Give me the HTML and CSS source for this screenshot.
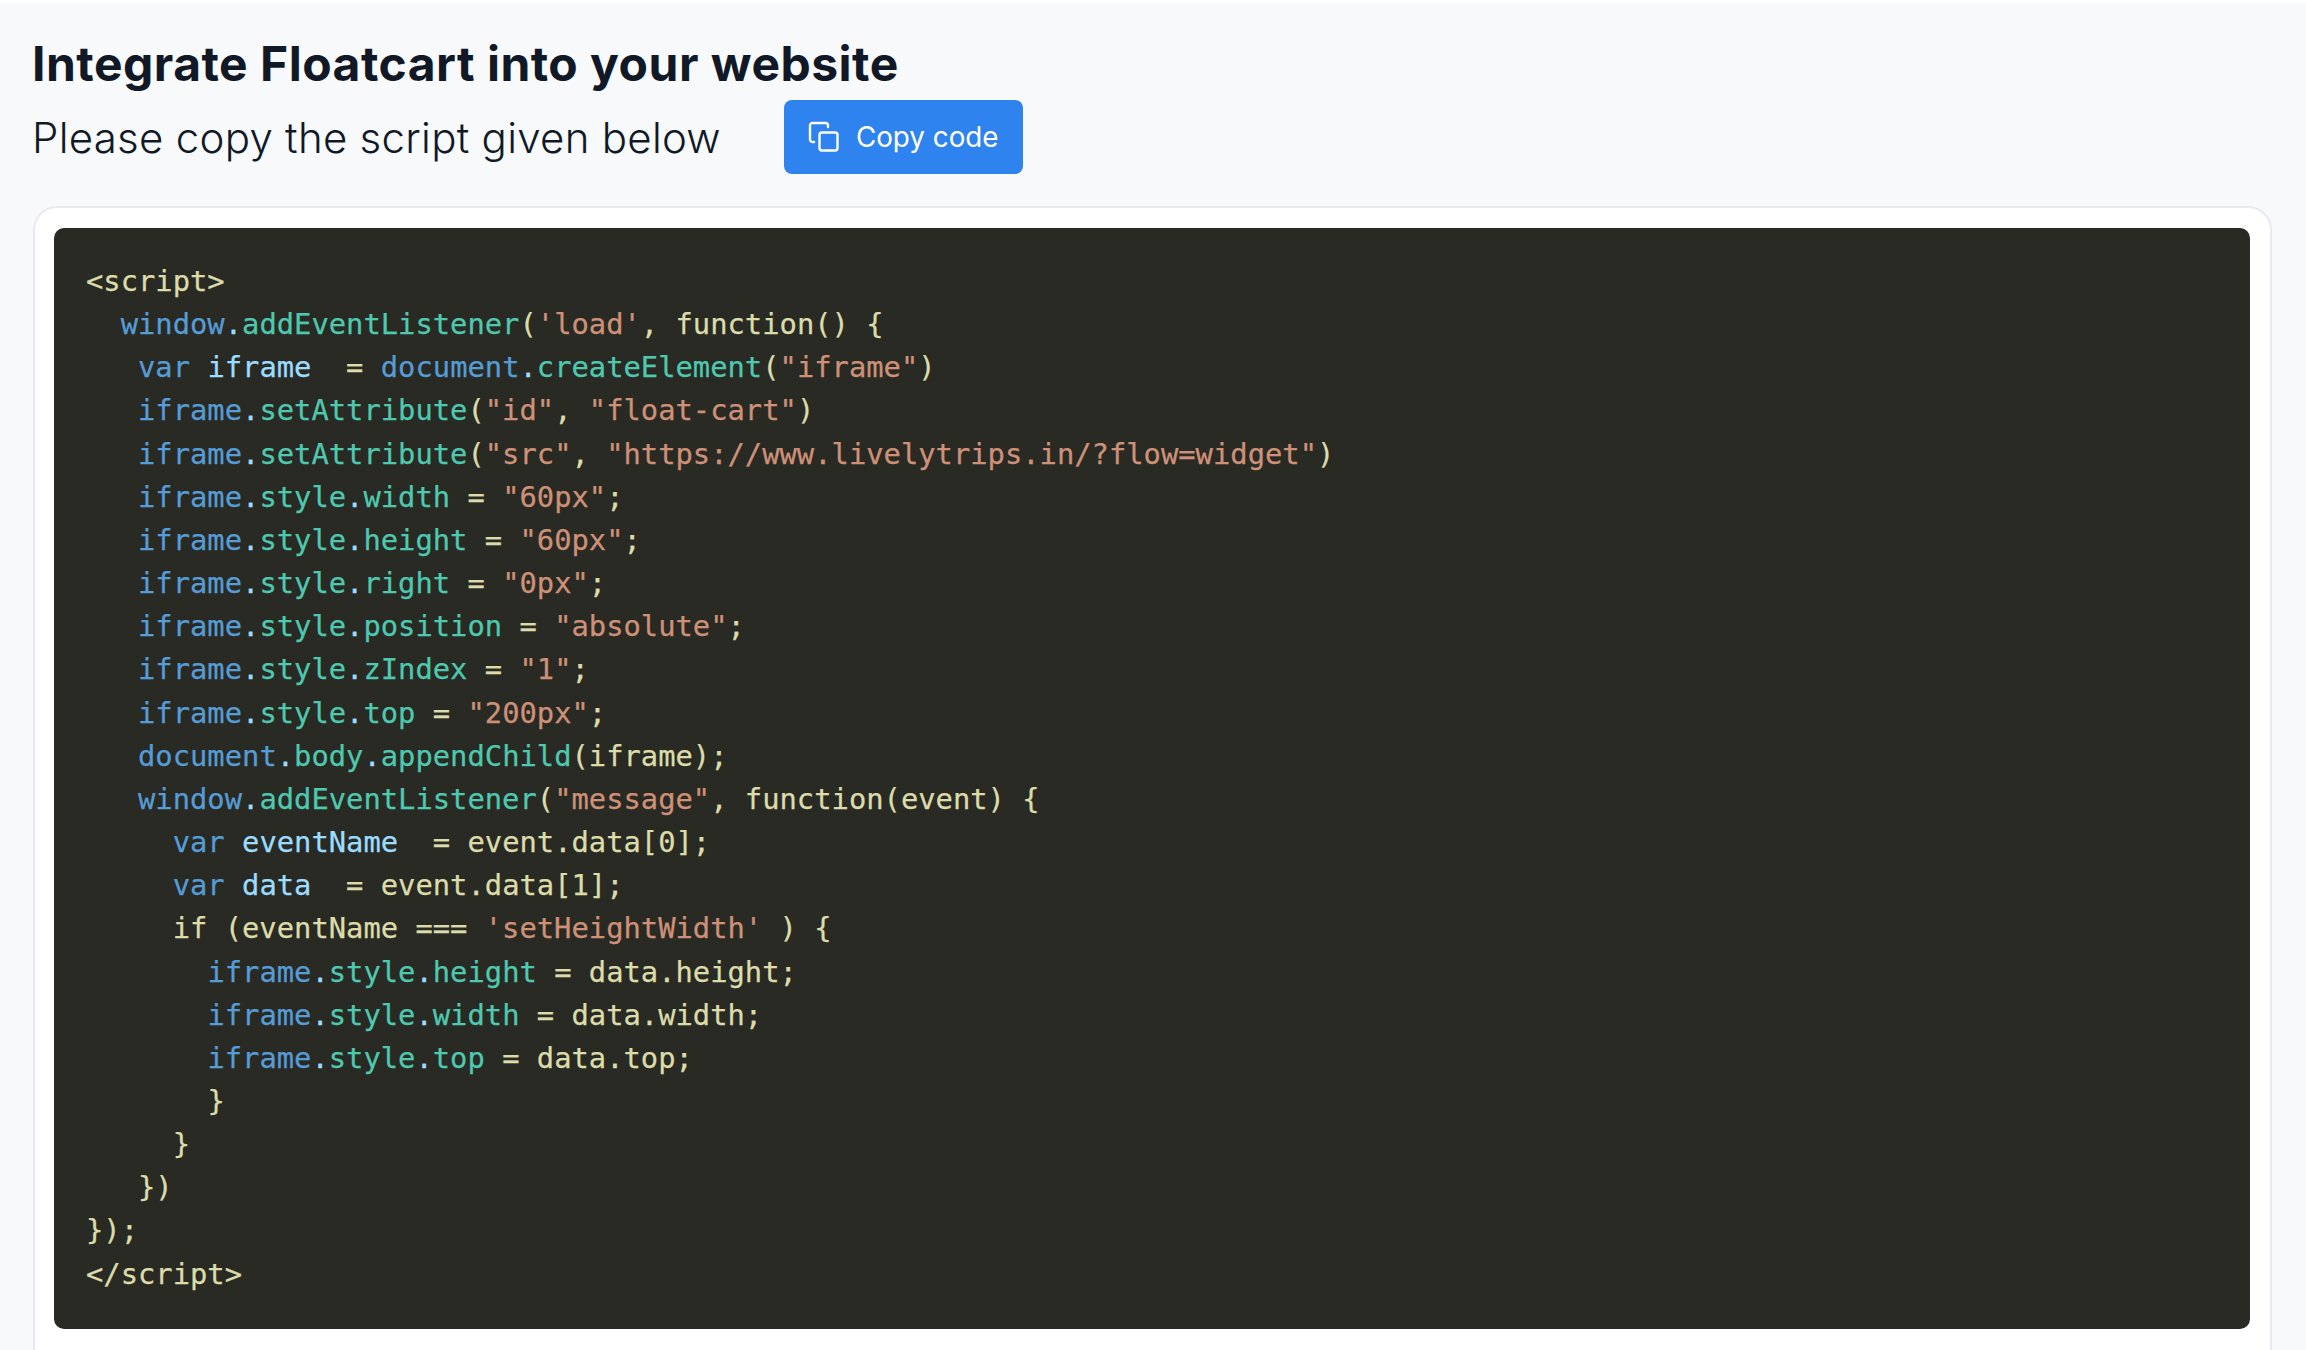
FILE: index.html
```html
<!DOCTYPE html>
<html lang="en">
<head>
<meta charset="utf-8">
<title>Integrate Floatcart</title>
<link rel="stylesheet" href="styles.css">
</head>
<body>
<main class="page">
  <h1 class="title">Integrate Floatcart into your website</h1>
  <div class="sub-row">
    <p class="subtitle">Please copy the script given below</p>
    <button class="copy-btn" type="button">
      <svg class="copy-icon" viewBox="0 0 32 32" fill="none" stroke="currentColor" stroke-width="2.4" stroke-linecap="round" stroke-linejoin="round">
        <rect x="11.500" y="11.500" width="18" height="18" rx="2.500"/>
        <path d="M6 21H4.500a2.500 2.500 0 0 1-2.500-2.500V4.500A2.500 2.500 0 0 1 4.500 2h13a2.500 2.500 0 0 1 2.500 2.500V6"/>
      </svg>
      <span>Copy code</span>
    </button>
  </div>
  <section class="card">
<pre class="code"><span class="y">&lt;script&gt;</span>
  <span class="b">window</span><span class="l">.</span><span class="t">addEventListener</span><span class="y">(</span><span class="s">'load'</span><span class="y">, function() {</span>
   <span class="b">var</span> <span class="l">iframe</span>  <span class="y">=</span> <span class="b">document</span><span class="l">.</span><span class="t">createElement</span><span class="y">(</span><span class="s">"iframe"</span><span class="y">)</span>
   <span class="b">iframe</span><span class="l">.</span><span class="t">setAttribute</span><span class="y">(</span><span class="s">"id"</span><span class="y">,</span> <span class="s">"float-cart"</span><span class="y">)</span>
   <span class="b">iframe</span><span class="l">.</span><span class="t">setAttribute</span><span class="y">(</span><span class="s">"src"</span><span class="y">,</span> <span class="s">"https://www.livelytrips.in/?flow=widget"</span><span class="y">)</span>
   <span class="b">iframe</span><span class="l">.</span><span class="t">style</span><span class="l">.</span><span class="t">width</span> <span class="y">=</span> <span class="s">"60px"</span><span class="y">;</span>
   <span class="b">iframe</span><span class="l">.</span><span class="t">style</span><span class="l">.</span><span class="t">height</span> <span class="y">=</span> <span class="s">"60px"</span><span class="y">;</span>
   <span class="b">iframe</span><span class="l">.</span><span class="t">style</span><span class="l">.</span><span class="t">right</span> <span class="y">=</span> <span class="s">"0px"</span><span class="y">;</span>
   <span class="b">iframe</span><span class="l">.</span><span class="t">style</span><span class="l">.</span><span class="t">position</span> <span class="y">=</span> <span class="s">"absolute"</span><span class="y">;</span>
   <span class="b">iframe</span><span class="l">.</span><span class="t">style</span><span class="l">.</span><span class="t">zIndex</span> <span class="y">=</span> <span class="s">"1"</span><span class="y">;</span>
   <span class="b">iframe</span><span class="l">.</span><span class="t">style</span><span class="l">.</span><span class="t">top</span> <span class="y">=</span> <span class="s">"200px"</span><span class="y">;</span>
   <span class="b">document</span><span class="l">.</span><span class="t">body</span><span class="l">.</span><span class="t">appendChild</span><span class="y">(iframe);</span>
   <span class="b">window</span><span class="l">.</span><span class="t">addEventListener</span><span class="y">(</span><span class="s">"message"</span><span class="y">, function(event) {</span>
     <span class="b">var</span> <span class="l">eventName</span>  <span class="y">= event.data[0];</span>
     <span class="b">var</span> <span class="l">data</span>  <span class="y">= event.data[1];</span>
     <span class="y">if (eventName ===</span> <span class="s">'setHeightWidth'</span> <span class="y">) {</span>
       <span class="b">iframe</span><span class="l">.</span><span class="t">style</span><span class="l">.</span><span class="t">height</span> <span class="y">= data.height;</span>
       <span class="b">iframe</span><span class="l">.</span><span class="t">style</span><span class="l">.</span><span class="t">width</span> <span class="y">= data.width;</span>
       <span class="b">iframe</span><span class="l">.</span><span class="t">style</span><span class="l">.</span><span class="t">top</span> <span class="y">= data.top;</span>
       <span class="y">}</span>
     <span class="y">}</span>
   <span class="y">})</span>
<span class="y">});</span>
<span class="y">&lt;/script&gt;</span></pre>
  </section>
</main>
</body>
</html>
```

FILE: styles.css
```css
* { box-sizing: border-box; }
html, body { margin: 0; height: 100%; overflow: hidden; }
body { background: #ffffff; padding-top: 3px; font-family: Inter, sans-serif; }
.page {
  background: #f8f9fb;
  height: 100%;
  padding: 31px 34px 0 32px;
  display: flex;
  flex-direction: column;
}
.title {
  margin: 0;
  font-size: 48px;
  line-height: 60px;
  font-weight: 700;
  letter-spacing: 0.48px;
  color: #111927;
}
.sub-row {
  display: flex;
  align-items: center;
  gap: 63px;
  margin-top: 6px;
}
.subtitle {
  margin: 0;
  font-size: 42px;
  font-weight: 300;
  letter-spacing: 0.27px;
  color: #111927;
}
.copy-btn {
  display: flex;
  align-items: center;
  gap: 16px;
  height: 74px;
  padding: 0 24px;
  border: 0;
  border-radius: 8px;
  background: #2f83ef;
  color: #fff;
  font-family: Inter, sans-serif;
  font-size: 27.8px;
  white-space: nowrap;
}
.copy-icon { width: 32px; height: 32px; flex: none; }
.card {
  margin-top: 32px;
  margin-left: 1px;
  flex: 1;
  min-height: 0;
  background: #fff;
  border: 2px solid #e9eaf0;
  border-bottom: 0;
  border-radius: 24px 24px 0 0;
  padding: 20px 20px 0 19px;
}
.code {
  margin: 0;
  padding: 32px 32px 33.200px;
  background: #292a24;
  border-radius: 10px;
  font-family: "DejaVu Sans Mono", monospace;
  font-size: 28.8px;
  line-height: 43.15px;
  color: #dcdcaa;
  -webkit-text-stroke: 0.25px currentColor;
}
.y { color: #dcdcaa; }
.b { color: #569cd6; }
.t { color: #4ec9b0; }
.s { color: #ce9178; }
.l { color: #9cdcfe; }
```
